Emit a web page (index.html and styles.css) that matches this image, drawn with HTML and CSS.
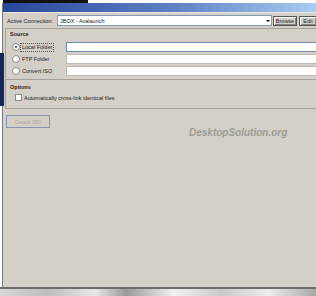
FILE: index.html
```html
<!DOCTYPE html>
<html lang="en">
<head>
  <meta charset="UTF-8" />
  <meta name="viewport" content="width=device-width, initial-scale=1.0"/>
  <title>Create ISO</title>
  <link rel="stylesheet" href="styles.css">
</head>
<body>
  <div class="desktop">
    <div class="topstrip"><div class="topstrip-dark"></div></div>
    <div class="backwin"></div>

    <div class="window">
      <div class="titlebar"></div>
      <div class="content">

        <div class="connbar">
          <span class="conn-label">Active Connection:</span>
          <div class="combo">
            <span class="combo-text">JBOX - Avalaunch</span>
            <span class="combo-btn">
              <svg width="4" height="2" viewBox="0 0 4 2"><path d="M0 0H4L2 2Z" fill="#000"/></svg>
            </span>
          </div>
          <button class="btn browse">Browse</button>
          <button class="btn edit">Edit</button>
        </div>

        <div class="group source">
          <div class="group-title">Source</div>
          <div class="rows">
            <div class="row">
              <span class="radio checked"></span>
              <span class="choice"><span class="choice-text focus">Local Folder</span></span>
              <input class="field active" type="text" />
            </div>
            <div class="row">
              <span class="radio"></span>
              <span class="choice"><span class="choice-text">FTP Folder</span></span>
              <input class="field" type="text" />
            </div>
            <div class="row">
              <span class="radio"></span>
              <span class="choice"><span class="choice-text">Convert ISO</span></span>
              <input class="field" type="text" />
            </div>
          </div>
        </div>

        <div class="group options">
          <div class="group-title">Options</div>
          <div class="check-row">
            <span class="checkbox"></span>
            <span>Automatically cross-link identical files</span>
          </div>
        </div>

        <button class="create" disabled>Create ISO</button>
        <div class="watermark">DesktopSolution.org</div>

      </div>
    </div>

    <div class="ground"></div>
  </div>
</body>
</html>
```

FILE: styles.css
```css
body {
  margin: 0;
  padding: 0;
  background: #fff;
  font-family: "Liberation Sans", Arial, sans-serif;
}
.desktop {
  position: relative;
  width: 316px;
  height: 296px;
  overflow: hidden;
  background: #fff;
}
.topstrip {
  height: 3px;
  padding-left: 3px;
}
.topstrip-dark {
  width: 85px;
  height: 3px;
  background: #111;
}
.backwin {
  position: absolute;
  left: 0;
  top: 53px;
  width: 4px;
  height: 53px;
  background: #16265a;
  z-index: 2;
}
.window {
  margin-left: 2px;
  width: 340px;
  height: 284px;
  border-left: 1px solid #7a7a7a;
  display: flex;
  flex-direction: column;
}
.titlebar {
  height: 9px;
  background: linear-gradient(to right, #27479a, #5d81c3 50%, #a8ccf2 92%);
}
.content {
  flex: 1;
  background: #d4d0c8;
  border-top: 1px solid #ebe9e3;
  font-size: 5.5px;
  color: #222;
}
.connbar {
  height: 15px;
  display: flex;
  align-items: center;
  padding-left: 4px;
}
.conn-label {
  width: 50px;
}
.combo {
  width: 215px;
  height: 11px;
  box-sizing: border-box;
  border: 1px solid #7f9db9;
  background: #fff;
  display: flex;
  align-items: center;
}
.combo-text {
  flex: 1;
  padding-left: 2px;
}
.combo-btn {
  width: 7px;
  display: flex;
  justify-content: center;
  align-items: center;
}
.btn {
  height: 10px;
  padding: 0;
  margin-top: 1px;
  box-sizing: border-box;
  border: 1px solid #555;
  background: #d4d0c8;
  box-shadow: inset 1px 1px 0 #fff, inset -1px -1px 0 #8a8780;
  font-family: inherit;
  font-size: 5.5px;
  color: #222;
}
.browse {
  margin-left: 1px;
  width: 24px;
}
.edit {
  margin-left: 2px;
  width: 18px;
}
.group {
  margin-left: 2px;
  box-sizing: border-box;
  border-left: 1px solid #a3a09a;
  border-top: 1px solid #a3a09a;
}
.source {
  height: 51px;
}
.group-title {
  height: 10px;
  line-height: 10px;
  padding-left: 4px;
  font-weight: bold;
}
.rows {
  padding-top: 3px;
  display: flex;
  flex-direction: column;
  gap: 2px;
}
.row {
  height: 10px;
  display: flex;
  align-items: center;
  padding-left: 6px;
}
.radio {
  width: 8px;
  height: 8px;
  box-sizing: border-box;
  border-radius: 50%;
  border: 1px solid #8d8a84;
  background: #fff;
  display: flex;
  align-items: center;
  justify-content: center;
}
.radio.checked::after {
  content: "";
  width: 2px;
  height: 2px;
  border-radius: 50%;
  background: #333;
}
.choice {
  width: 46px;
}
.choice-text {
  display: inline-block;
  padding: 0 1px;
  line-height: 7px;
  border: 1px dotted transparent;
}
.choice-text.focus {
  border-color: #555;
}
.field {
  width: 260px;
  height: 10px;
  box-sizing: border-box;
  margin: 0;
  padding: 0;
  border: 1px solid #bdbab2;
  background: #fff;
}
.field.active {
  border-color: #7489b0;
}
.options {
  height: 30px;
  border-bottom: 1px solid #a3a09a;
}
.options .group-title {
  height: 12px;
  line-height: 14px;
}
.check-row {
  display: flex;
  align-items: center;
  padding-left: 9px;
  margin-top: 2px;
}
.checkbox {
  width: 7px;
  height: 7px;
  box-sizing: border-box;
  border: 1px solid #8d8a84;
  background: #fff;
  margin-right: 2px;
}
.create {
  display: block;
  margin: 6px 0 0 3px;
  width: 44px;
  height: 13px;
  padding: 0;
  box-sizing: border-box;
  border: 1px solid #8794b4;
  background: #d4d0c8;
  font-family: inherit;
  font-size: 5.5px;
  color: #a9a69e;
}
.watermark {
  margin: -1px 0 0 186px;
  font-size: 10px;
  line-height: 12px;
  font-weight: bold;
  font-style: italic;
  color: #9d9b95;
}
.ground {
  height: 7px;
  border-top: 2px solid #6c6c6c;
  background: linear-gradient(to right, #d8d8d8, #bdbdbd 15%, #e8e8e8 30%, #9a9a9a 40%, #f2f2f2 55%, #c9c9c9 70%, #ededed 85%, #a8a8a8);
}
```
